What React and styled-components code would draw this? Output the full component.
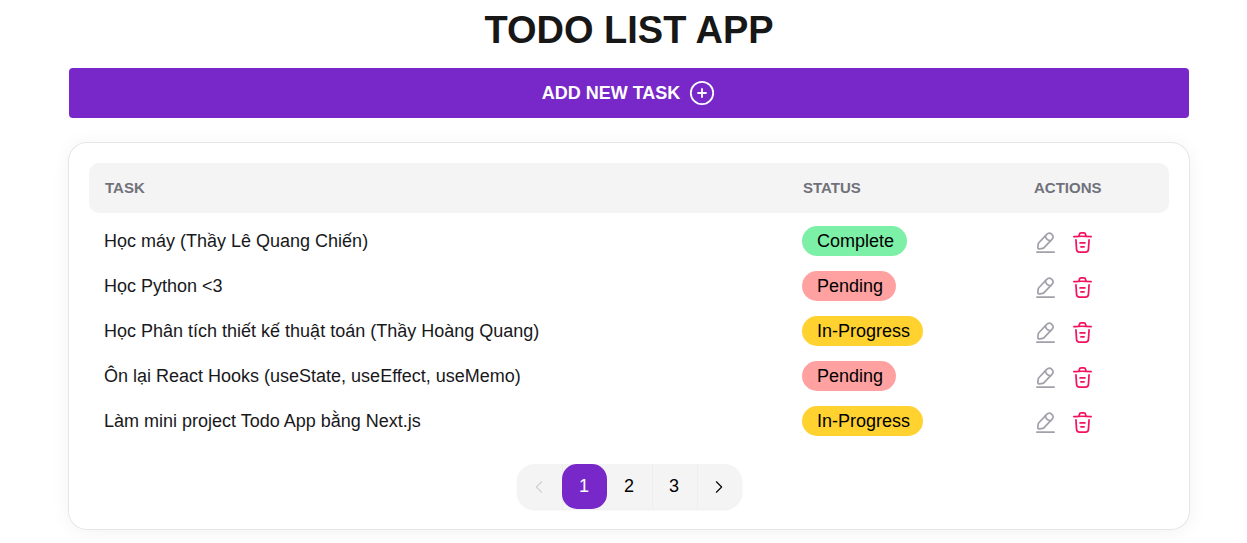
import React, { useState } from "react";
import styled, { createGlobalStyle } from "styled-components";

const GlobalStyle = createGlobalStyle`
  *, *::before, *::after { box-sizing: border-box; }
  body {
    margin: 0;
    background: #fff;
    color: #18181b;
    font-family: "Liberation Sans", Arial, sans-serif;
    font-size: 18px;
    line-height: 27px;
  }
  button { font: inherit; border: 0; cursor: pointer; }
`;

const Page = styled.main`
  display: flex;
  flex-direction: column;
  padding: 6px 58px 13px 69px;
`;

const Title = styled.h1`
  margin: 0 0 14px;
  text-align: center;
  font-size: 38px;
  line-height: 48px;
  font-weight: 700;
  color: #171717;
`;

const AddButton = styled.button`
  display: flex;
  align-items: center;
  justify-content: center;
  gap: 8px;
  height: 50px;
  border-radius: 4px;
  background: #7828c8;
  color: #fff;
  && { font-weight: 700; }
`;

const Card = styled.section`
  display: flex;
  flex-direction: column;
  align-items: center;
  gap: 21px;
  margin-top: 25px;
  padding: 20px;
  border-radius: 18px;
  background: #fff;
  box-shadow: 0 0 0 1px #e6e6e8, 0 2px 20px rgba(0, 0, 0, 0.06);
`;

const Table = styled.table`
  width: 100%;
  table-layout: fixed;
  border-collapse: separate;
  border-spacing: 0;
`;

const HeadCell = styled.th`
  width: ${(p) => p.$width};
  height: 50px;
  padding: 0 16px 2px;
  background: #f4f4f5;
  color: #71717a;
  font-size: 15px;
  text-align: left;
  &:first-child { border-radius: 10px 0 0 10px; }
  &:last-child { border-radius: 0 10px 10px 0; }
`;

const TaskRows = styled.tbody`
  &::before { content: ""; display: table-row; height: 5px; }
`;

const Cell = styled.td`
  height: 45px;
  padding: 0 15px;
`;

const TaskCell = styled(Cell)`
  padding-top: 2px;
`;

const Chip = styled.span`
  display: inline-flex;
  align-items: center;
  height: 30px;
  padding: 2px 13px 0 15px;
  border-radius: 15px;
  background: ${(p) => p.$color};
  color: #000;
  vertical-align: middle;
`;

const Actions = styled.div`
  display: flex;
  gap: 14px;
  padding: 4px 0 0 1px;
`;

const IconButton = styled.button`
  display: flex;
  padding: 0;
  background: none;
  color: ${(p) => (p.$danger ? "#f31260" : "#a1a1aa")};
`;

const Pager = styled.nav`
  display: flex;
  border-radius: 18px;
  background: #f4f4f5;
  box-shadow: 0 1px 2px rgba(0, 0, 0, 0.08);
`;

const PageButton = styled.button`
  display: flex;
  align-items: center;
  justify-content: center;
  width: 45px;
  height: 45px;
  padding: 0;
  border-radius: ${(p) => (p.$active ? "15px" : "0")};
  background: ${(p) => (p.$active ? "#7828c8" : "transparent")};
  color: ${(p) => (p.$active ? "#fff" : "#000")};
  &:disabled { color: #d0d0d3; }
  &:not(:last-child) { box-shadow: ${(p) => (p.$active ? "none" : "1px 0 0 #eeeeef")}; }
`;

const PlusCircle = () => (
  <svg width="28" height="28" viewBox="0 0 28 28" fill="none" stroke="currentColor" strokeWidth="1.8" strokeLinecap="round" aria-hidden="true">
    <circle cx="14" cy="14" r="11.2" />
    <path d="M14 10v8M10 14h8" />
  </svg>
);

const EditIcon = () => (
  <svg width="23" height="23" viewBox="0 0 20 20" fill="none" stroke="currentColor" strokeWidth="1.5" strokeLinecap="round" strokeLinejoin="round" aria-hidden="true">
    <path d="M11.05 3L4.208 10.242c-.258.275-.508.816-.558 1.191l-.308 2.7c-.109.975.591 1.642 1.558 1.475l2.683-.458c.375-.067.9-.342 1.159-.625l6.841-7.242c1.184-1.25 1.717-2.675-.125-4.416C13.625 1.142 12.233 1.75 11.05 3z" />
    <path d="M9.908 4.208c.359 2.3 2.225 4.059 4.542 4.292" />
    <path d="M2.5 18.333h15" />
  </svg>
);

const DeleteIcon = () => (
  <svg width="23" height="23" viewBox="0 0 20 20" fill="none" stroke="currentColor" strokeWidth="1.5" strokeLinecap="round" strokeLinejoin="round" aria-hidden="true">
    <path d="M17.5 4.983a84 84 0 0 0-8.35-.416c-1.65 0-3.3.083-4.95.25l-1.7.166" />
    <path d="M7.083 4.142l.184-1.092c.133-.792.233-1.383 1.641-1.383h2.184c1.408 0 1.516.625 1.641 1.391l.184 1.084" />
    <path d="M15.708 7.617l-.541 8.391c-.092 1.309-.167 2.325-2.492 2.325h-5.35c-2.325 0-2.4-1.016-2.492-2.325l-.541-8.391" />
    <path d="M8.608 13.75h2.775M7.917 10.417h4.166" />
  </svg>
);

const Chevron = ({ left }) => (
  <svg width="18" height="18" viewBox="0 0 24 24" fill="none" stroke="currentColor" strokeWidth="1.5" strokeLinecap="round" strokeLinejoin="round" aria-hidden="true">
    <path d={left ? "M15.5 19l-7-7 7-7" : "M8.5 5l7 7-7 7"} />
  </svg>
);

const statusColors = {
  Complete: "#7df0a7",
  Pending: "#ffa1a1",
  "In-Progress": "#ffd230",
};

const tasks = [
  ["Học máy (Thầy Lê Quang Chiến)", "Complete"],
  ["Học Python <3", "Pending"],
  ["Học Phân tích thiết kế thuật toán (Thầy Hoàng Quang)", "In-Progress"],
  ["Ôn lại React Hooks (useState, useEffect, useMemo)", "Pending"],
  ["Làm mini project Todo App bằng Next.js", "In-Progress"],
];

export default function App() {
  const [page, setPage] = useState(1);
  return (
    <Page>
      <GlobalStyle />
      <Title>TODO LIST APP</Title>
      <AddButton type="button">
        ADD NEW TASK
        <PlusCircle />
      </AddButton>
      <Card>
        <Table>
          <thead>
            <tr>
              <HeadCell $width="auto" scope="col">TASK</HeadCell>
              <HeadCell $width="231px" scope="col">STATUS</HeadCell>
              <HeadCell $width="151px" scope="col">ACTIONS</HeadCell>
            </tr>
          </thead>
          <TaskRows>
            {tasks.map(([name, status]) => (
              <tr key={name}>
                <TaskCell>{name}</TaskCell>
                <Cell><Chip $color={statusColors[status]}>{status}</Chip></Cell>
                <Cell>
                  <Actions>
                    <IconButton type="button" aria-label="Edit task"><EditIcon /></IconButton>
                    <IconButton type="button" aria-label="Delete task" $danger><DeleteIcon /></IconButton>
                  </Actions>
                </Cell>
              </tr>
            ))}
          </TaskRows>
        </Table>
        <Pager aria-label="Pagination">
          <PageButton type="button" aria-label="Previous page" disabled={page === 1} onClick={() => setPage(page - 1)}>
            <Chevron left />
          </PageButton>
          {[1, 2, 3].map((n) => (
            <PageButton key={n} type="button" $active={n === page} aria-current={n === page ? "page" : undefined} onClick={() => setPage(n)}>
              {n}
            </PageButton>
          ))}
          <PageButton type="button" aria-label="Next page" disabled={page === 3} onClick={() => setPage(page + 1)}>
            <Chevron />
          </PageButton>
        </Pager>
      </Card>
    </Page>
  );
}
